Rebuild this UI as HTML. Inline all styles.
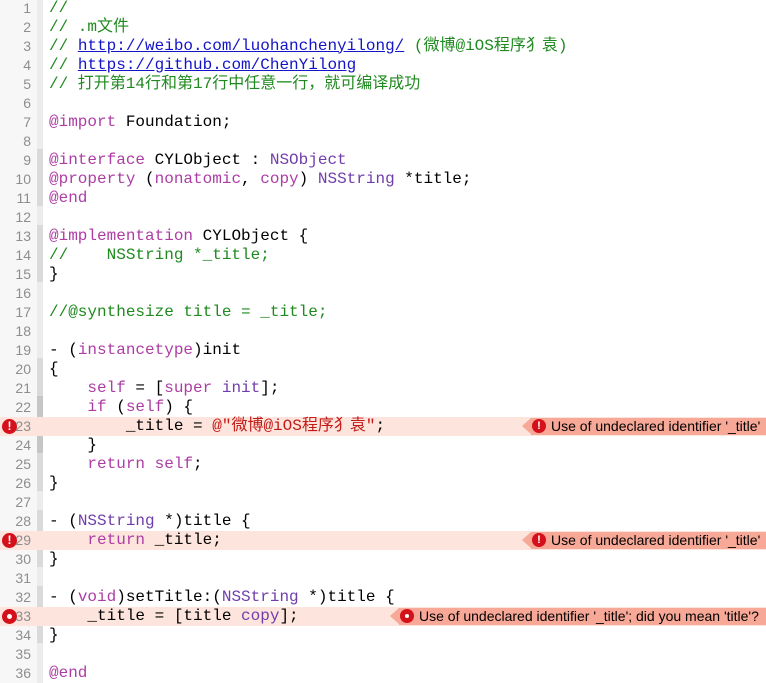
<!DOCTYPE html>
<html><head><meta charset="utf-8"><style>
*{margin:0;padding:0;box-sizing:border-box}
body{width:766px;height:683px;background:#fff;position:relative;overflow:hidden;font-family:"Liberation Mono","Noto Sans CJK SC",monospace;font-size:16px}
.g{position:absolute;left:0;top:0;width:37px;height:683px;background:#f7f7f7}
.r{position:absolute;left:37px;top:0;width:6px;height:683px;background:#ececec}
.rb{position:absolute;left:37px;width:6px;background:#dadada}
.rc{position:absolute;left:37px;width:6px;background:#c6c6c6}
.l{position:absolute;left:0;width:766px;height:19px;line-height:19px;white-space:pre}
.n{position:absolute;left:0;width:31px;text-align:right;color:#8e8e8e;font-family:"Liberation Sans",sans-serif;font-size:14px}
.c{position:absolute;left:49px;color:#000}
.e{background:#fde4dc}
.cm{color:#1f8a1f}.lk{color:#1414c8;text-decoration:underline}
.kw{color:#ad3da4}.cl{color:#703daa}.st{color:#c41a16}.mt{color:#703daa}
.ic{position:absolute;left:2px;top:2px;width:15px;height:15px;border-radius:50%;background:#d4101a;color:#fff;font:bold 12px/15px "Liberation Sans",sans-serif;text-align:center}
.bd{position:absolute;top:1px;height:17px;right:0;background:#f8a897;font:14px/17px "Liberation Sans",sans-serif;color:#000;padding-left:20px}
.bd:before{content:"";position:absolute;left:-9px;top:0;border-right:9px solid #f8a897;border-top:8.5px solid transparent;border-bottom:8.5px solid transparent}
.bi{position:absolute;left:1px;top:1.5px;width:14px;height:14px;border-radius:50%;background:#d4101a;color:#fff;font:bold 11px/14px "Liberation Sans",sans-serif;text-align:center}
.dot{display:inline-block;width:5px;height:5px;background:#fff;border-radius:50%;vertical-align:middle}
</style></head><body>
<div class="g"></div><div class="r"></div>
<div class="rb" style="top:149px;height:57px"></div>
<div class="rb" style="top:225px;height:57px"></div>
<div class="rb" style="top:358px;height:133px"></div>
<div class="rc" style="top:396px;height:57px"></div>
<div class="rb" style="top:510px;height:57px"></div>
<div class="rb" style="top:586px;height:57px"></div>

<div class="l" style="top:-1.5px"><span class="n">1</span><span class="c cm">//</span></div>
<div class="l" style="top:17.5px"><span class="n">2</span><span class="c cm">// .m文件</span></div>
<div class="l" style="top:36.5px"><span class="n">3</span><span class="c cm">// <span class="lk">http://weibo.com/luohanchenyilong/</span> (微博@iOS程序犭袁)</span></div>
<div class="l" style="top:55.5px"><span class="n">4</span><span class="c cm">// <span class="lk">https://github.com/ChenYilong</span></span></div>
<div class="l" style="top:74.5px"><span class="n">5</span><span class="c cm">// 打开第14行和第17行中任意一行，就可编译成功</span></div>
<div class="l" style="top:93.5px"><span class="n">6</span></div>
<div class="l" style="top:112.5px"><span class="n">7</span><span class="c"><span class="kw">@import</span> Foundation;</span></div>
<div class="l" style="top:131.5px"><span class="n">8</span></div>
<div class="l" style="top:150.5px"><span class="n">9</span><span class="c"><span class="kw">@interface</span> CYLObject : <span class="cl">NSObject</span></span></div>
<div class="l" style="top:169.5px"><span class="n">10</span><span class="c"><span class="kw">@property</span> (<span class="kw">nonatomic</span>, <span class="kw">copy</span>) <span class="cl">NSString</span> *title;</span></div>
<div class="l" style="top:188.5px"><span class="n">11</span><span class="c"><span class="kw">@end</span></span></div>
<div class="l" style="top:207.5px"><span class="n">12</span></div>
<div class="l" style="top:226.5px"><span class="n">13</span><span class="c"><span class="kw">@implementation</span> CYLObject {</span></div>
<div class="l" style="top:245.5px"><span class="n">14</span><span class="c cm">//    NSString *_title;</span></div>
<div class="l" style="top:264.5px"><span class="n">15</span><span class="c">}</span></div>
<div class="l" style="top:283.5px"><span class="n">16</span></div>
<div class="l" style="top:302.5px"><span class="n">17</span><span class="c cm">//@synthesize title = _title;</span></div>
<div class="l" style="top:321.5px"><span class="n">18</span></div>
<div class="l" style="top:340.5px"><span class="n">19</span><span class="c">- (<span class="kw">instancetype</span>)init</span></div>
<div class="l" style="top:359.5px"><span class="n">20</span><span class="c">{</span></div>
<div class="l" style="top:378.5px"><span class="n">21</span><span class="c">    <span class="kw">self</span> = [<span class="kw">super</span> <span class="mt">init</span>];</span></div>
<div class="l" style="top:397.5px"><span class="n">22</span><span class="c">    <span class="kw">if</span> (<span class="kw">self</span>) {</span></div>
<div class="l e" style="top:416.5px"><span class="ic">!</span><span class="n">23</span><span class="c">        _title = <span class="st">@"微博@iOS程序犭袁"</span>;</span><div class="bd" style="left:531px"><span class="bi">!</span>Use of undeclared identifier '_title'</div></div>
<div class="l" style="top:435.5px"><span class="n">24</span><span class="c">    }</span></div>
<div class="l" style="top:454.5px"><span class="n">25</span><span class="c">    <span class="kw">return</span> <span class="kw">self</span>;</span></div>
<div class="l" style="top:473.5px"><span class="n">26</span><span class="c">}</span></div>
<div class="l" style="top:492.5px"><span class="n">27</span></div>
<div class="l" style="top:511.5px"><span class="n">28</span><span class="c">- (<span class="cl">NSString</span> *)title {</span></div>
<div class="l e" style="top:530.5px"><span class="ic">!</span><span class="n">29</span><span class="c">    <span class="kw">return</span> _title;</span><div class="bd" style="left:531px"><span class="bi">!</span>Use of undeclared identifier '_title'</div></div>
<div class="l" style="top:549.5px"><span class="n">30</span><span class="c">}</span></div>
<div class="l" style="top:568.5px"><span class="n">31</span></div>
<div class="l" style="top:587.5px"><span class="n">32</span><span class="c">- (<span class="kw">void</span>)setTitle:(<span class="cl">NSString</span> *)title {</span></div>
<div class="l e" style="top:606.5px"><span class="ic"><span class="dot"></span></span><span class="n">33</span><span class="c">    _title = [title <span class="mt">copy</span>];</span><div class="bd" style="left:399px"><span class="bi"><span class="dot" style="width:4px;height:4px"></span></span>Use of undeclared identifier '_title'; did you mean 'title'?</div></div>
<div class="l" style="top:625.5px"><span class="n">34</span><span class="c">}</span></div>
<div class="l" style="top:644.5px"><span class="n">35</span></div>
<div class="l" style="top:663.5px"><span class="n">36</span><span class="c"><span class="kw">@end</span></span></div>
</body></html>
